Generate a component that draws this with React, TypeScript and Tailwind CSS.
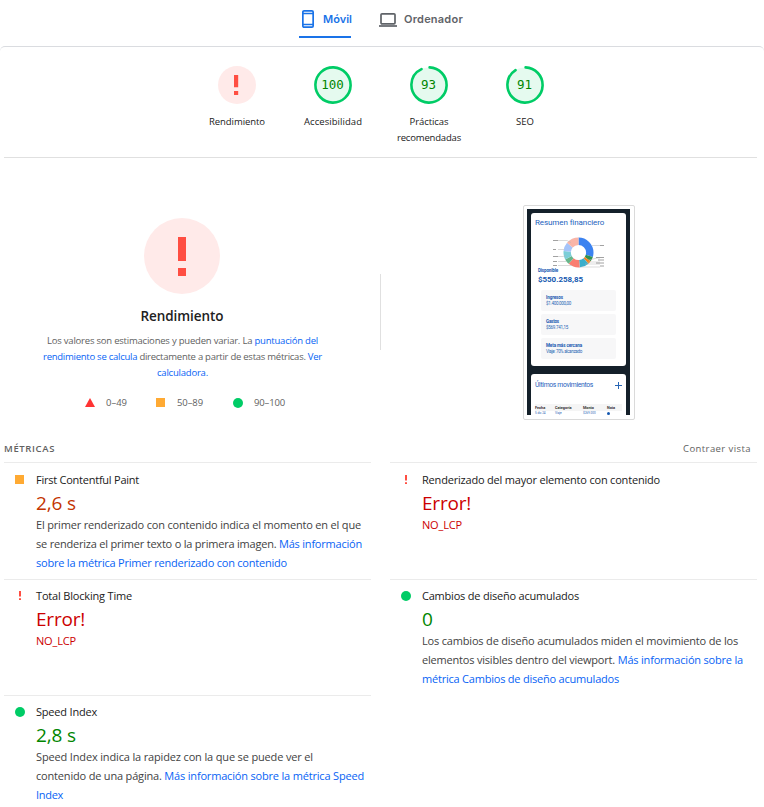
import { useLayoutEffect, useRef, useState, type ReactNode } from 'react';
import { clsx } from 'clsx';

/** A single line of text whose tracking is adjusted to fill the given width. */
function Line({ w, className, children }: { w: number; className?: string; children: ReactNode }) {
  const ref = useRef<HTMLSpanElement>(null);
  const [tracking, setTracking] = useState(0);
  useLayoutEffect(() => {
    const el = ref.current;
    if (!el) return;
    const count = (el.textContent ?? '').length;
    setTracking((w - el.getBoundingClientRect().width) / count);
  }, [w]);
  return (
    <div className={clsx('whitespace-pre', className)}>
      <span ref={ref} style={{ letterSpacing: tracking }}>{children}</span>
    </div>
  );
}

const Link = ({ children }: { children: ReactNode }) => <span className="text-[#0763f5]">{children}</span>;

function Bang({ className }: { className: string }) {
  return (
    <svg viewBox="0 0 8 39" preserveAspectRatio="none" className={className} fill="#ff4e42">
      <path d="M0 0h8v24H0zM0 31h8v8H0z" />
    </svg>
  );
}

function Gauge({ score, label }: { score?: number; label: [string, number][] }) {
  const r = 17.6;
  const c = 2 * Math.PI * r;
  return (
    <div className="flex w-24 flex-col items-center">
      <div className="grid size-[38px] place-items-center">
        {score === undefined ? (
          <div className="col-start-1 row-start-1 grid size-[38px] place-items-center rounded-full bg-[#ffeae9]">
            <Bang className="h-5 w-[4.200px]" />
          </div>
        ) : (
          <>
            <svg viewBox="0 0 38 38" className="col-start-1 row-start-1 size-[38px]">
              <circle
                cx="19" cy="19" r={r} fill="#e5faef" stroke="#00cc66" strokeWidth="2.6" strokeLinecap="round"
                strokeDasharray={score === 100 ? undefined : `${(c * score) / 100 - 1.3} ${c}`}
                transform="rotate(-88 19 19)"
              />
            </svg>
            <span className="col-start-1 row-start-1 font-['DejaVu_Sans_Mono',monospace] text-[12.5px] leading-none text-[#018600]">
              {score}
            </span>
          </>
        )}
      </div>
      <div className="mt-2.5 flex flex-col items-center pl-px text-[9.500px] leading-4 font-medium text-[#212121]">
        {label.map(([t, w]) => <Line key={t} w={w}>{t}</Line>)}
      </div>
    </div>
  );
}

type Row = { w: number; body: ReactNode };

function Metric({ mark, name, nameW, value, valueW, tone, rows, first }: {
  mark: 'square' | 'bang' | 'dot'; name: string; nameW: number; value: string; valueW: number;
  tone: string; rows: Row[]; first?: boolean;
}) {
  return (
    <section className={clsx('flex border-t border-[#ebebeb]', first ? 'h-[117px]' : 'h-[116px]')}>
      <div className={clsx('flex w-8 shrink-0 justify-center', first ? 'pt-3' : 'pt-[11px]')}>
        {mark === 'square' && <div className="mr-px size-[9px] bg-[#fa3]" />}
        {mark === 'dot' && <div className="size-2.5 rounded-full bg-[#0c6]" />}
        {mark === 'bang' && <Bang className="h-[9px] w-[2.4px]" />}
      </div>
      <div className={first ? 'pt-2' : 'pt-[7px]'}>
        <Line w={nameW} className="text-[11px] leading-[18px] text-[#212121]">{name}</Line>
        <Line w={valueW} className={clsx('mt-px text-[19px] leading-[27px]', tone)}>{value}</Line>
        <div className="-mt-0.5 text-[11px] leading-[19px] text-[#424242]">
          {rows.map((r, i) => <Line key={i} w={r.w}>{r.body}</Line>)}
        </div>
      </div>
    </section>
  );
}

const slices: [number, string][] = [
  [35, '#3b82f0'], [6, '#2f9150'], [4, '#f58220'], [12, '#3aaecb'], [15, '#fa7d70'],
  [7, '#67b58a'], [11, '#7bced8'], [11, '#a5c4f9'], [17, '#f9b5a8'],
];

function Donut() {
  const total = slices.reduce((s, [v]) => s + v, 0);
  let start = 0;
  const c = 2 * Math.PI * 11.3;
  return (
    <svg viewBox="0 0 95 36" className="h-9 w-[95px]">
      {slices.map(([v, color]) => {
        const offset = start;
        start += (v / total) * c;
        return (
          <circle key={color} cx="47.5" cy="20.5" r="11.3" fill="none" stroke={color} strokeWidth="7.4"
            strokeDasharray={`${(v / total) * c} ${c}`} strokeDashoffset={-offset} transform="rotate(-90 47.5 20.5)" />
        );
      })}
      <g stroke="#b5b5b5" strokeWidth=".5" fill="none">
        <path d="M27 8.5h9l4 2M27 17.5h6M27 24.500h5l3-1M27 29.500h8M27 33.500h14M61 13.500h8M58 28l8-2h3M57 30h12M54 32h15M50 35h19" />
      </g>
      <g stroke="#8a8a8a" strokeWidth=".8">
        <path d="M22 8.500h5M22 17.500h3M22 24.500h5M22 29.500h4M22 33.500h4M69 13.500h4M65 25.500h8M67 28h6M65 31h8M69 34h4" />
      </g>
    </svg>
  );
}

function MiniBox({ title, titleW, text, textW }: { title: string; titleW: number; text: string; textW: number }) {
  return (
    <div className="flex h-[21px] w-[75px] flex-col justify-center rounded-[2px] bg-[#f7f7f8] pl-[5px] text-[4.500px] leading-[6px] text-[#2866b5]">
      <Line w={titleW} className="font-bold text-[#1558b0]">{title}</Line>
      <Line w={textW}>{text}</Line>
    </div>
  );
}

function PhoneShot() {
  return (
    <div className="h-[215px] w-28 rounded-[2px] border border-[#dadada] p-[3px]">
      <div className="flex h-[206px] w-[103px] flex-col items-center gap-2 overflow-hidden bg-[#14202a] pt-1 font-[family-name:Roboto,sans-serif]">
        <div className="flex h-[153px] w-[95px] shrink-0 flex-col rounded-[3px] bg-white pt-1">
          <Line w={69} className="pl-1 text-[8px] leading-[11px] text-[#1d62bd]">Resumen financiero</Line>
          <div className="mt-1"><Donut /></div>
          <Line w={20} className="pl-[7px] text-[4.500px] leading-[5px] font-bold text-[#1558b0]">Disponible</Line>
          <Line w={45} className="mt-[2px] pl-[7px] text-[8px] leading-[10px] font-bold text-[#1558b0]">$550.258,85</Line>
          <div className="mt-[5px] flex flex-col gap-[3px] pl-2.5">
            <MiniBox title="Ingresos" titleW={17} text="$1.400.000,00" textW={25} />
            <MiniBox title="Gastos" titleW={13} text="$569.741,15" textW={22} />
            <MiniBox title="Meta más cercana" titleW={36} text="Viaje: 70% alcanzado" textW={36} />
          </div>
        </div>
        <div className="h-[50px] w-[95px] shrink-0 rounded-t-[3px] bg-white pt-1">
          <div className="flex items-center justify-between px-1">
            <Line w={58} className="text-[6.800px] leading-[14px] text-[#1d62bd]">Últimos movimientos</Line>
            <svg viewBox="0 0 7 7" className="size-[7px]" stroke="#2866b5" strokeWidth="1"><path d="M3.500 0v7M0 3.500h7" /></svg>
          </div>
          <div className="mx-1 mt-3 grid h-[7px] grid-cols-[20px_28px_24px_14px] items-center bg-[#f5f5f5] text-[3.800px] leading-[4px] font-bold text-[#333]">
            <span>Fecha</span><span>Categoría</span><span>Monto</span><span>Nota</span>
          </div>
          <div className="mx-1 grid h-1 grid-cols-[20px_28px_24px_14px] items-center text-[3px] leading-[3px] text-[#2866b5]">
            <span>5 dic 24</span><span>Viaje</span><span>$269.000</span><span className="size-[3px] rounded-full bg-[#1558b0]" />
          </div>
        </div>
      </div>
    </div>
  );
}

export default function App() {
  return (
    <main className="h-[807px] w-[764px] overflow-hidden bg-white font-['Open_Sans','Noto_Sans',sans-serif]">
      <nav className="flex h-[46px] pl-[299px] font-[family-name:Inter,sans-serif] text-[11px]">
        <div className="flex h-[38px] w-[52px] items-center border-b-2 border-[#1a73e8] pl-[3px] font-semibold text-[#1a73e8]">
          <svg viewBox="0 0 12 18" className="mt-0.5 mr-[9px] h-[18px] w-3 shrink-0" fill="none" stroke="currentColor" strokeWidth="1.700">
            <rect x=".85" y=".85" width="10.300" height="16.300" rx="1.200" />
            <path d="M1 3.500h10M1 14.500h10" />
          </svg>
          <Line w={29} className="pt-0.5">Móvil</Line>
        </div>
        <div className="flex h-[38px] items-center pb-0.5 pl-7 font-semibold text-[#5f6368]">
          <svg viewBox="0 0 18 14" className="mt-1 mr-[7px] h-3.5 w-[18px] shrink-0" fill="none" stroke="currentColor" strokeWidth="1.700">
            <rect x="2" y=".85" width="14" height="10" rx="1" />
            <path d="M0 13h18" />
          </svg>
          <Line w={59} className="pt-0.5">Ordenador</Line>
        </div>
      </nav>

      <div className="h-[761px] rounded-t-[5px] border-t border-[#dadce0]">
        <div className="mr-[7px] ml-1 flex h-[111px] justify-center border-b border-[#e0e0e0] pt-[19px]">
          <Gauge label={[['Rendimiento', 56]]} />
          <Gauge score={100} label={[['Accesibilidad', 58]]} />
          <Gauge score={93} label={[['Prácticas', 39], ['recomendadas', 64]]} />
          <Gauge score={91} label={[['SEO', 18]]} />
        </div>

        <div className="flex h-[281px]">
          <div className="flex w-[364px] flex-col items-center pt-[60px]">
            <div className="grid size-[76px] place-items-center rounded-full bg-[#ffeae9]">
              <Bang className="h-[39px] w-2" />
            </div>
            <Line w={83} className="mt-3 text-[13.500px] leading-5 font-semibold text-[#212121]">Rendimiento</Line>
            <div className="mt-[7px] flex flex-col items-center pl-px text-[9.500px] leading-4 text-[#616161]">
              <Line w={271}>Los valores son estimaciones y pueden variar. La <Link>puntuación del</Link></Line>
              <Line w={279}><Link>rendimiento se calcula</Link> directamente a partir de estas métricas. <Link>Ver</Link></Line>
              <Line w={51}><Link>calculadora.</Link></Line>
            </div>
            <div className="mt-3.5 flex w-full items-center pl-[85px] text-[9.500px] leading-4 text-[#616161]">
              <svg viewBox="0 0 10 9" className="mr-[11px] mb-px h-[9px] w-2.5" fill="#f33"><path d="M5 0l5 9H0z" /></svg>
              <Line w={21}>0–49</Line>
              <div className="mr-3 mb-px ml-[29px] size-[9px] bg-[#fa3]" />
              <Line w={26}>50–89</Line>
              <div className="mr-[11px] mb-px ml-[30px] size-2.5 rounded-full bg-[#0c6]" />
              <Line w={31}>90–100</Line>
            </div>
          </div>
          <div className="mt-[116px] ml-4 h-[76px] w-px bg-[#e0e0e0]" />
          <div className="mt-[47px] ml-[142px]"><PhoneShot /></div>
        </div>

        <div className="mr-[13px] ml-1 flex h-[23px] items-center justify-between pb-1 text-[9.500px] leading-[19px] text-[#616161]">
          <Line w={51} className="font-semibold">MÉTRICAS</Line>
          <Line w={68}>Contraer vista</Line>
        </div>

        <div className="mr-[7px] ml-1 grid grid-cols-2 gap-x-[19px]">
          <Metric first mark="square" name="First Contentful Paint" nameW={103} value="2,6 s" valueW={40} tone="text-[#c33300]"
            rows={[
              { w: 325, body: 'El primer renderizado con contenido indica el momento en el que' },
              { w: 326, body: <>se renderiza el primer texto o la primera imagen. <Link>Más información</Link></> },
              { w: 251, body: <Link>sobre la métrica Primer renderizado con contenido</Link> },
            ]} />
          <Metric first mark="bang" name="Renderizado del mayor elemento con contenido" nameW={238} value="Error!" valueW={49} tone="text-[#c00]"
            rows={[{ w: 40, body: <span className="text-[#c00]">NO_LCP</span> }]} />
          <Metric mark="bang" name="Total Blocking Time" nameW={96} value="Error!" valueW={49} tone="text-[#c00]"
            rows={[{ w: 40, body: <span className="text-[#c00]">NO_LCP</span> }]} />
          <Metric mark="dot" name="Cambios de diseño acumulados" nameW={157} value="0" valueW={11} tone="text-[#018600]"
            rows={[
              { w: 316, body: 'Los cambios de diseño acumulados miden el movimiento de los' },
              { w: 321, body: <>elementos visibles dentro del viewport. <Link>Más información sobre la</Link></> },
              { w: 197, body: <Link>métrica Cambios de diseño acumulados</Link> },
            ]} />
          <Metric mark="dot" name="Speed Index" nameW={61} value="2,8 s" valueW={40} tone="text-[#018600]"
            rows={[
              { w: 277, body: 'Speed Index indica la rapidez con la que se puede ver el' },
              { w: 328, body: <>contenido de una página. <Link>Más información sobre la métrica Speed</Link></> },
              { w: 27, body: <Link>Index</Link> },
            ]} />
        </div>
      </div>
    </main>
  );
}
